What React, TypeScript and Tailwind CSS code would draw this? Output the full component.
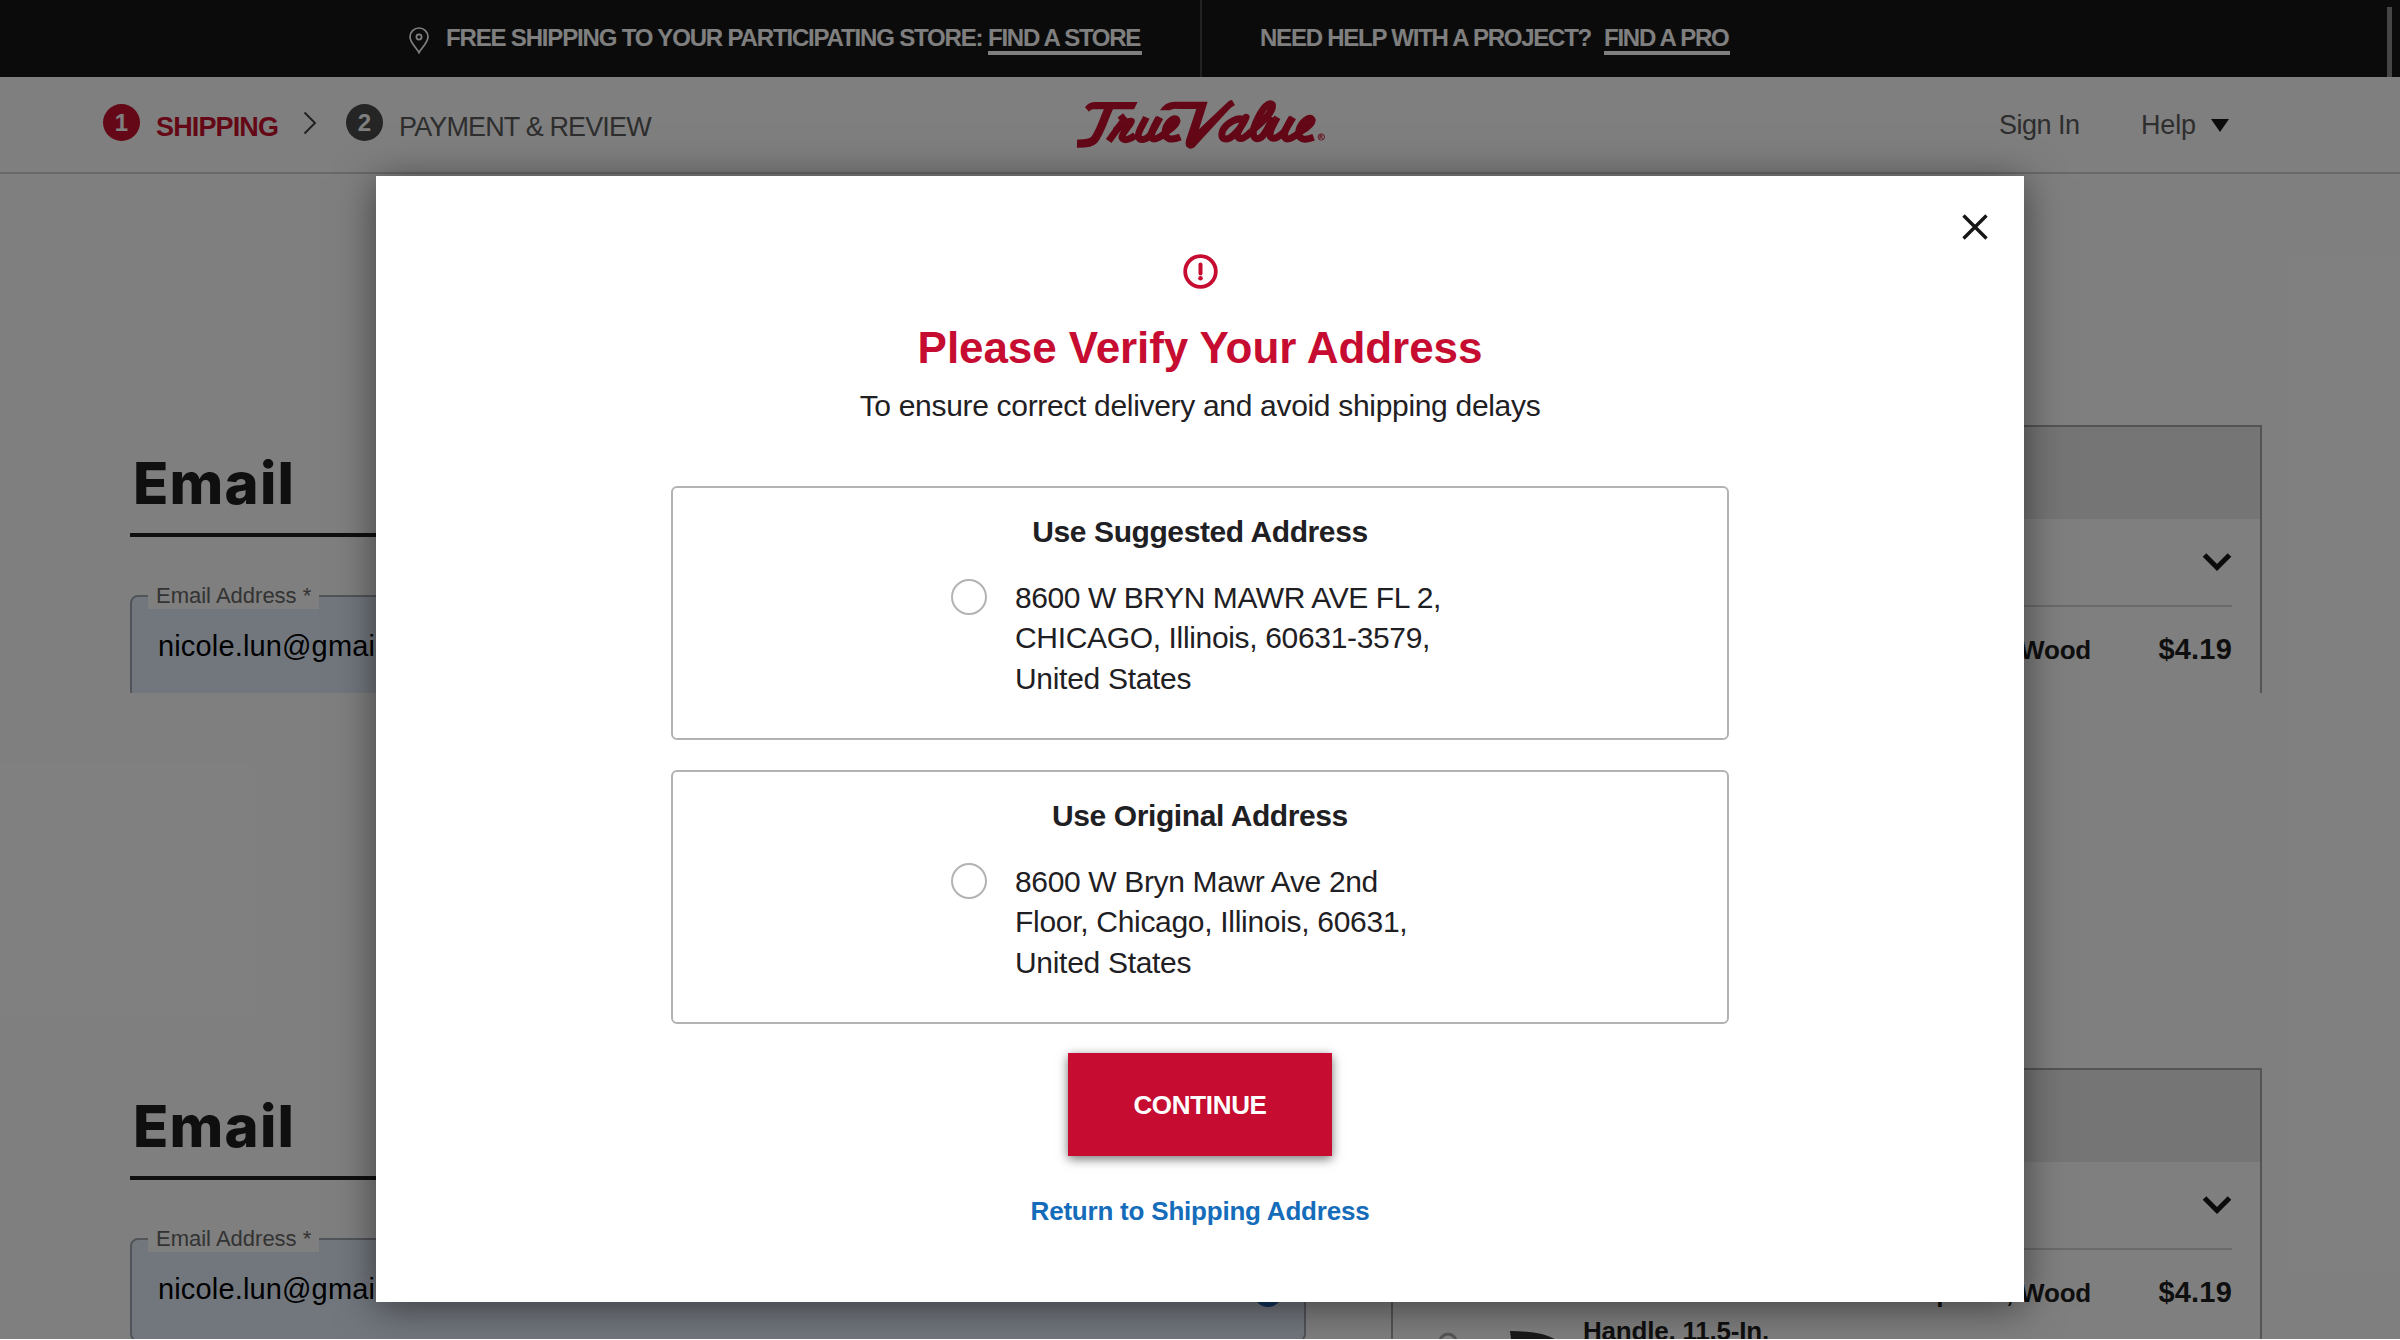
import type { ReactNode } from "react";

function PinIcon() {
  return (
    <svg viewBox="0 0 20 27" className="mt-[27px] h-[27px] w-5 shrink-0" fill="none" stroke="#fff" strokeWidth="1.7">
      <path d="M10 25.6C8.4 21.600 1 16.200 1 9.800a9 8.800 0 0 1 18 0C19 16.200 11.600 21.600 10 25.600z" />
      <circle cx="10" cy="10" r="2.600" />
    </svg>
  );
}

function BrandLogo() {
  return (
    <svg viewBox="0 0 900 270" className="mt-[3px] h-[90px] w-[300px] shrink-0" fill="none" stroke="#c8102e" strokeWidth="21" strokeLinejoin="round">
      <path d="M117 95 105 82Q115 66 138 66H263L252 88H130Q122 88 117 95Z" fill="#c8102e" stroke="none" />
      <path d="M178 82C160 120 150 160 132 180Q120 192 81 191" strokeWidth="25" />
      <path d="M211 106 222 120 176 183" strokeLinejoin="miter" />
      <path d="M196 152Q226 122 244 124C236 142 214 160 216 173C222 184 240 178 256 166" />
      <path d="M289 112C278 136 262 156 265 170C270 184 290 180 302 164L330 112" />
      <path d="M326 114C314 138 299 160 306 174C314 184 334 168 352 154C374 140 386 124 378 117C368 112 350 130 346 150C342 180 364 182 391 171" />
      <path d="M330 91Q345 66 372 65H473L447 148 526 73Q538 60 546 60L555 76Q546 79 538 88L440 194Q432 206 420 206Q402 202 408 180L439 87H385Q368 84 360 91Z" fill="#c8102e" stroke="none" />
      <path d="M584 121C566 108 530 128 518 152C508 180 530 184 550 166C566 152 578 136 588 112C576 138 558 158 563 170C572 184 592 168 604 154" />
      <path d="M604 154C634 130 672 94 667 74C654 60 626 100 611 146C606 174 618 182 634 172C646 160 656 142 668 112" />
      <path d="M682 112C668 136 656 158 661 170C672 182 690 168 702 156L729 112" />
      <path d="M725 114C712 138 698 160 705 173C714 184 736 168 752 154C776 142 792 124 784 116C774 110 752 130 747 150C742 180 764 182 791 172" />
      <circle cx="814" cy="171" r="9.500" strokeWidth="2.500" />
      <path d="M810 177V165H815Q818 168 815 171H810M814 171 818 177" strokeWidth="2.500" />
    </svg>
  );
}

function StepBadge({ children, tone }: { children: ReactNode; tone: string }) {
  return (
    <span className={`flex size-[37px] shrink-0 items-center justify-center rounded-full text-2xl font-bold text-white ${tone}`}>
      {children}
    </span>
  );
}

function TopBar() {
  return (
    <div className="flex h-[77px] bg-[#161616] text-2xl leading-[27px] font-bold whitespace-nowrap text-white">
      <div className="flex w-[1200px] items-start pl-[409px]">
        <PinIcon />
        <span className="mt-6 ml-[17px] w-[542px] tracking-[-1.167px]">FREE SHIPPING TO YOUR PARTICIPATING STORE:</span>
        <a className="mt-6 w-[154px] border-b-4 border-white tracking-[-1.25px]">FIND A STORE</a>
      </div>
      <div className="flex flex-1 items-start border-l-2 border-[#444] pl-[58px]">
        <span className="mt-6 w-[344px] tracking-[-1.23px]">NEED HELP WITH A PROJECT?</span>
        <a className="mt-6 w-[126px] border-b-4 border-white tracking-[-1.25px]">FIND A PRO</a>
        <div className="mt-[7px] mr-2 ml-auto h-[70px] w-[5px] bg-[#8d8d8d]" />
      </div>
    </div>
  );
}

function CheckoutHeader() {
  return (
    <header className="flex h-[97px] items-start border-b-2 border-[#d2d2d2] bg-white text-[27px] leading-[37px] whitespace-nowrap text-[#5c5c5c]">
      <div className="flex w-[1050px] items-start pt-[27px] pl-[103px]">
        <StepBadge tone="bg-[#c8102e]">1</StepBadge>
        <span className="mt-[5px] ml-4 w-[146px] font-bold tracking-[-0.861px] text-[#c8102e]">SHIPPING</span>
        <svg viewBox="0 0 14 24" className="mt-[7px] ml-px h-6 w-3.5" fill="none" stroke="#444" strokeWidth="2">
          <path d="M1.500 1.500 12 12 1.500 22.500" />
        </svg>
        <StepBadge tone="ml-[29px] bg-[#4a4a4a]">2</StepBadge>
        <span className="mt-[5px] ml-4 tracking-[-0.86px]">PAYMENT &amp; REVIEW</span>
      </div>
      <BrandLogo />
      <nav className="flex items-start pt-[30px] pl-[649px]">
        <a className="w-[142px] tracking-[-0.507px]">Sign In</a>
        <a className="w-[70px] tracking-[-0.171px]">Help</a>
        <svg viewBox="0 0 18 13" className="mt-3 h-[13px] w-[18px]" fill="#161616">
          <path d="M0 0H18L9 13z" />
        </svg>
      </nav>
    </header>
  );
}

function EmailForm() {
  return (
    <div className="w-[1176px] pt-[274px]">
      <h1 className="border-b-4 border-[#1e1e1e] pb-[15px] pl-[3px] font-['Inter'] text-[58px] leading-[70px] font-extrabold tracking-[1.2px] text-[#1e1e1e]">Email</h1>
      <div className="relative mt-[58px] h-[104px] rounded-lg border-2 border-[#a2a8b0] bg-[#e5effd] pt-[29px] pl-[26px]">
        <label className="absolute -top-[15px] left-4 w-[171px] bg-white pl-2 text-[22px] leading-[27px] whitespace-nowrap text-[#666]">Email Address *</label>
        <p className="text-[29px] leading-10 tracking-[0.15px] text-black">nicole.lun@gmail.com</p>
        <span className="absolute top-[39px] right-[22px] size-7 rounded-full bg-[#2468b8]" />
      </div>
    </div>
  );
}

function OrderSummary() {
  return (
    <aside className="mt-[251px] h-[600px] w-[871px] border-2 border-[#a9a9a9] bg-white font-bold text-[#1e1e1e]">
      <div className="h-[92px] bg-[#ebebeb]" />
      <div className="mr-7 ml-[29px] flex h-[88px] items-start justify-end border-b-2 border-[#d4d4d4]">
        <svg viewBox="0 0 30 20" className="mt-[34px] h-5 w-[30px]" fill="none" stroke="#161616" strokeWidth="5">
          <path d="M2.500 2 15 14.500 27.500 2" />
        </svg>
      </div>
      <div className="flex items-start pt-6 pr-7 pl-[29px]">
        <svg viewBox="0 0 140 140" className="size-[140px]">
          <circle cx="26" cy="68" r="8" fill="none" stroke="#aaa" strokeWidth="3" />
          <path d="M88 57Q126 57 138 69L120 90H92z" fill="#333" />
        </svg>
        <p className="ml-[21px] w-[520px] text-[26px] leading-[38px] tracking-[-0.204px] whitespace-nowrap">
          <span className="flex w-[508px] justify-end">Green Thumb Trowel Tempered, Wood</span>
          <span className="block">Handle, 11.5-In.</span>
        </p>
        <p className="ml-auto text-[29px] leading-[37px] tracking-[0.2px]">$4.19</p>
      </div>
    </aside>
  );
}

function CheckoutSection({ height }: { height: string }) {
  return (
    <section className={`flex items-start gap-[85px] overflow-hidden pl-[130px] ${height}`}>
      <EmailForm />
      <OrderSummary />
    </section>
  );
}

function AddressCard({ title, lines }: { title: string; lines: [string, string][] }) {
  return (
    <div className="h-[254px] w-[1058px] rounded-md border-2 border-[#b3b3b3] pt-6 whitespace-nowrap">
      <h3 className="text-center text-[30px] leading-10 font-bold tracking-[-0.41px]">{title}</h3>
      <label className="mt-[26px] flex items-start pl-[278px]">
        <span className="mt-px size-9 shrink-0 rounded-full border-2 border-[#b3b3b3]" />
        <span className="ml-7 text-[30px] leading-[40.4px]">
          {lines.map(([text, spacing]) => (
            <span key={text} className={`block ${spacing}`}>{text}</span>
          ))}
        </span>
      </label>
    </div>
  );
}

function VerifyAddressDialog() {
  return (
    <div role="dialog" className="relative flex h-[1126px] w-[1648px] flex-col items-center bg-white pt-[77px] text-[#1f2023] shadow-[0_5px_38px_rgba(0,0,0,0.5)]">
      <button className="absolute top-[38px] right-[36px]">
        <svg viewBox="0 0 26 26" className="size-[26px]" fill="none" stroke="#161616" strokeWidth="3.400">
          <path d="M1.500 1.500 24.500 24.500M24.500 1.500 1.500 24.500" />
        </svg>
      </button>
      <svg viewBox="0 0 37 37" className="size-[37px]" fill="none" stroke="#c60c30" strokeLinecap="round">
        <circle cx="18.500" cy="18.500" r="15.300" strokeWidth="3.800" />
        <path d="M18.500 11.500V20.500" strokeWidth="4" />
        <circle cx="18.500" cy="25.300" r="2.300" fill="#c60c30" stroke="none" />
      </svg>
      <h2 className="mt-7 text-[44px] leading-[60px] font-bold tracking-[-0.07px] text-[#c60c30]">Please Verify Your Address</h2>
      <p className="mt-2 text-[30px] leading-10 tracking-[-0.315px]">To ensure correct delivery and avoid shipping delays</p>
      <div className="mt-[60px] flex flex-col gap-[30px]">
        <AddressCard
          title="Use Suggested Address"
          lines={[
            ["8600 W BRYN MAWR AVE FL 2,", "tracking-[-0.42px]"],
            ["CHICAGO, Illinois, 60631-3579,", "tracking-[-0.34px]"],
            ["United States", "tracking-[-0.3px]"],
          ]}
        />
        <AddressCard
          title="Use Original Address"
          lines={[
            ["8600 W Bryn Mawr Ave 2nd", "tracking-[-0.35px]"],
            ["Floor, Chicago, Illinois, 60631,", "tracking-[-0.3px]"],
            ["United States", "tracking-[-0.3px]"],
          ]}
        />
      </div>
      <button className="mt-[29px] h-[103px] w-[264px] bg-[#c60c30] pt-px text-[26px] font-bold tracking-[-0.32px] text-white shadow-[0_3px_10px_rgba(0,0,0,0.55)]">CONTINUE</button>
      <a className="mt-[37px] text-[26px] leading-9 font-bold tracking-[-0.21px] text-[#146cba]">Return to Shipping Address</a>
    </div>
  );
}

export default function App() {
  return (
    <div className="h-[1340px] w-[2400px] overflow-hidden bg-white font-['Liberation_Sans',sans-serif]">
      <div className="relative h-[1339px] overflow-hidden">
        <TopBar />
        <CheckoutHeader />
        <main className="flex flex-col gap-[124px]">
          <CheckoutSection height="h-[519px]" />
          <CheckoutSection height="h-[522px]" />
        </main>
        <div className="absolute inset-0 flex items-start justify-center bg-black/50 pt-[176px]">
          <VerifyAddressDialog />
        </div>
      </div>
    </div>
  );
}
